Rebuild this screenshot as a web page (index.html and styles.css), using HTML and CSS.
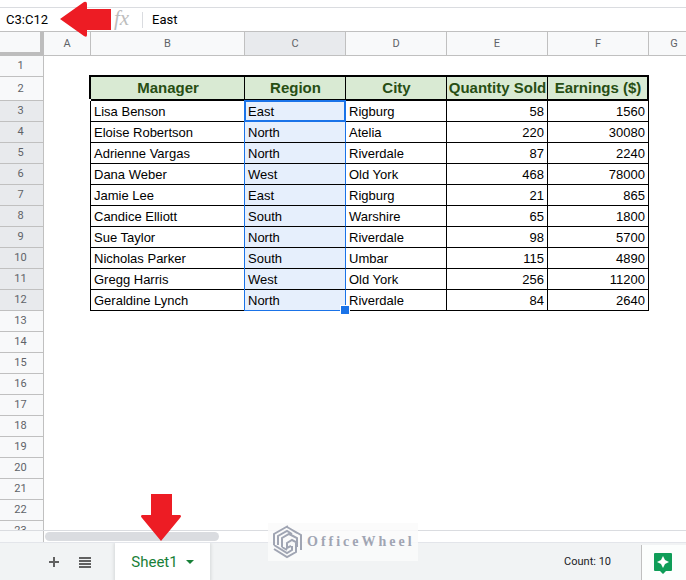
FILE: index.html
```html
<!DOCTYPE html>
<html lang="en">
<head>
    <meta charset="UTF-8">
    <title>Sheet1</title>
    <link rel="stylesheet" href="styles.css">
</head>
<body>
    <div class="formula-bar">
        <input class="name-box" type="text" value="C3:C12" aria-label="Name box">
        <label class="fx" for="formula">fx</label>
        <input class="formula" id="formula" type="text" value="East">
        <svg class="arrow arrow-left" width="52" height="36" viewBox="0 0 52 36">
            <path d="M0 18 24 1q3-1 3 2v5h24v21H27v5q0 3-3 1z"/>
        </svg>
    </div>

    <div class="grid">
        <table class="sheet">
            <colgroup>
                <col class="w-num"><col class="w-a"><col class="w-b"><col class="w-std"><col class="w-std"><col class="w-std"><col class="w-std"><col class="w-g"><col>
            </colgroup>
            <thead>
                <tr>
                    <td class="corner"></td>
                    <th>A</th><th>B</th><th class="on">C</th><th>D</th><th>E</th><th>F</th><th>G</th><th></th>
                </tr>
            </thead>
            <tbody>
                <tr><th>1</th></tr>
                <tr class="fields"><th>2</th><td class="edge"></td><td>Manager</td><td>Region</td><td>City</td><td>Quantity Sold</td><td>Earnings ($)</td></tr>
                <tr class="row"><th>3</th><td></td><td>Lisa Benson</td><td class="active">East</td><td>Rigburg</td><td>58</td><td>1560</td></tr>
                <tr class="row"><th>4</th><td></td><td>Eloise Robertson</td><td>North</td><td>Atelia</td><td>220</td><td>30080</td></tr>
                <tr class="row"><th>5</th><td></td><td>Adrienne Vargas</td><td>North</td><td>Riverdale</td><td>87</td><td>2240</td></tr>
                <tr class="row"><th>6</th><td></td><td>Dana Weber</td><td>West</td><td>Old York</td><td>468</td><td>78000</td></tr>
                <tr class="row"><th>7</th><td></td><td>Jamie Lee</td><td>East</td><td>Rigburg</td><td>21</td><td>865</td></tr>
                <tr class="row"><th>8</th><td></td><td>Candice Elliott</td><td>South</td><td>Warshire</td><td>65</td><td>1800</td></tr>
                <tr class="row"><th>9</th><td></td><td>Sue Taylor</td><td>North</td><td>Riverdale</td><td>98</td><td>5700</td></tr>
                <tr class="row"><th>10</th><td></td><td>Nicholas Parker</td><td>South</td><td>Umbar</td><td>115</td><td>4890</td></tr>
                <tr class="row"><th>11</th><td></td><td>Gregg Harris</td><td>West</td><td>Old York</td><td>256</td><td>11200</td></tr>
                <tr class="row"><th>12</th><td></td><td>Geraldine Lynch</td><td class="last">North</td><td>Riverdale</td><td>84</td><td>2640</td></tr>
                <tr><th>13</th></tr>
                <tr><th>14</th></tr>
                <tr><th>15</th></tr>
                <tr><th>16</th></tr>
                <tr><th>17</th></tr>
                <tr><th>18</th></tr>
                <tr><th>19</th></tr>
                <tr><th>20</th></tr>
                <tr><th>21</th></tr>
                <tr><th>22</th></tr>
                <tr><th>23</th></tr>
            </tbody>
        </table>
    </div>

    <div class="scroll"><div class="track"><div class="thumb"></div></div></div>

    <div class="footer">
        <button class="icon-btn" aria-label="Add sheet">
            <svg width="12" height="12" viewBox="0 0 12 12"><path d="M5 1h2v4h4v2H7v4H5V7H1V5h4z"/></svg>
        </button>
        <button class="icon-btn" aria-label="All sheets">
            <svg width="12" height="12" viewBox="0 0 12 12"><path d="M0 1h12v2H0zM0 4h12v2H0zM0 7h12v2H0zM0 10h12v2H0z"/></svg>
        </button>
        <button class="tab">Sheet1
            <svg width="8" height="4" viewBox="0 0 8 4"><path d="M0 0h8L4 4z"/></svg>
        </button>
        <div class="count">Count: 10</div>
        <button class="explore" aria-label="Explore">
            <svg width="18" height="21" viewBox="0 0 18 21">
                <path fill="#0f9d58" d="M1 0h16q1 0 1 1v16q0 1-1 1h-5l-3 3-3-3H1q-1 0-1-1V1q0-1 1-1z"/>
                <path fill="#fff" d="M9 3l2 4 4 2-4 2-2 4-2-4-4-2 4-2z"/>
            </svg>
        </button>
        <svg class="arrow arrow-down" width="40" height="48" viewBox="0 0 40 48">
            <path d="M10 0h21v21h8q2 1 0 3L20 47 1 24q-2-2 0-3h9z"/>
        </svg>
        <div class="watermark">
            <svg width="30" height="34" viewBox="0 0 30 34">
                <path d="M1 20V9L15 1M5 20V11l9-5 5 3M9 22v-9l7-4 4 2M14 2l14 8v15M19 5l5 3M24 22v-9l-4-2M1 24l13 8 9-5V17l-4-2-5 3v5l4-2M1 20l13 8 5-3v-4M9 22l5 3"/>
            </svg>
            <span>OfficeWheel</span>
        </div>
    </div>
</body>
</html>
```

FILE: styles.css
```css
* {
    box-sizing: border-box;
}
body {
    margin: 0;
    padding-top: 7px;
    height: 100vh;
    display: flex;
    flex-direction: column;
    overflow: hidden;
    font-family: Roboto, sans-serif;
    background: #fff;
}
button {
    border: 0;
    padding: 0;
    background: none;
    font-family: inherit;
    cursor: pointer;
}
input {
    border: 0;
    padding: 0;
    outline: 0;
    background: none;
    font: 13px/22px Roboto, sans-serif;
    color: #000;
}

/* formula bar */
.formula-bar {
    position: relative;
    display: flex;
    align-items: center;
    height: 25px;
    border-top: 1px solid #dadce0;
    border-bottom: 1px solid #c0c0c0;
}
.name-box {
    width: 100px;
    height: 23px;
    padding-left: 6px;
}
.fx {
    width: 43px;
    height: 16px;
    padding-left: 14px;
    border-right: 1px solid #dadce0;
    font: italic 21px/12px "Liberation Serif", serif;
    color: #bdbdbd;
}
.formula {
    flex: 1;
    height: 23px;
    padding-left: 9px;
}
.arrow {
    position: absolute;
    fill: #ed1c24;
}
.arrow-left {
    left: 60px;
    top: -7px;
}
.arrow-down {
    left: 141px;
    top: -49px;
}

/* grid */
.grid {
    flex: 1;
    min-height: 0;
    overflow: hidden;
}
.sheet {
    width: 100%;
    table-layout: fixed;
    border-collapse: separate;
    border-spacing: 0;
    font-size: 11px;
}
.w-num { width: 44px; }
.w-a { width: 47px; }
.w-b { width: 154px; }
.w-std { width: 101px; }
.w-g { width: 51px; }
.sheet th,
.sheet td {
    padding: 0;
    height: 21px;
    line-height: 16px;
    white-space: nowrap;
}
.sheet th {
    background: #f8f9fa;
    border-right: 1px solid #c0c0c0;
    border-bottom: 1px solid #c0c0c0;
    color: #5f6368;
    font-weight: normal;
    text-align: center;
}
.sheet tbody th {
    padding-right: 2px;
}
.sheet thead th {
    height: 24px;
}
.sheet .corner {
    background: #f8f9fa;
    border-right: 4px solid #bdbdbd;
    border-bottom: 4px solid #bdbdbd;
}
.sheet .on,
.sheet .row th {
    background: #e8eaed;
}
.fields td {
    background: #d9ead3;
    border-right: 1px solid #000;
    border-bottom: 2px solid #000;
    box-shadow: 0 -2px #000;
    color: #274e13;
    font: bold 15px/16px "Liberation Sans", Arial, sans-serif;
    text-align: center;
}
.sheet .fields th,
.sheet .fields td {
    height: 24px;
}
.sheet .fields td {
    padding-left: 1px;
}
.fields td:nth-child(3) {
    box-shadow: -2px -2px #000, 0 -2px #000;
}
.fields td:last-child {
    border-right-width: 2px;
}
.sheet .edge {
    background: none;
    border: 0;
    box-shadow: none;
}
.row td {
    border-right: 1px solid #000;
    border-bottom: 1px solid #000;
    color: #000;
    font: 13px/16px "Liberation Sans", Arial, sans-serif;
}
.sheet .row td {
    padding: 2px 3px 0;
}
.sheet .row td:nth-child(2) {
    border-bottom: 0;
}
.row td:nth-child(n+6) {
    text-align: right;
}

/* selection */
.row td:nth-child(4) {
    position: relative;
    background: #e6effc;
    border-right-color: #1a73e8;
    box-shadow: -1px 0 #1a73e8;
}
.row .active::after {
    content: "";
    position: absolute;
    inset: -1px;
    border: 2px solid #1a73e8;
}
.sheet .last {
    border-bottom-color: #1a73e8;
}
.last::after {
    content: "";
    position: absolute;
    z-index: 1;
    right: -5px;
    bottom: -5px;
    width: 8px;
    height: 8px;
    border: 1px solid #fff;
    background: #1a73e8;
}

/* scrollbar */
.scroll {
    height: 12px;
    padding-left: 43px;
    border-top: 1px solid #dadce0;
    background: #f8f9fa;
}
.track {
    height: 11px;
    padding: 1px;
    border-left: 1px solid #c0c0c0;
    background: #fff;
}
.thumb {
    width: 174px;
    height: 9px;
    border-radius: 5px;
    background: #dadce0;
}

/* bottom bar */
.footer {
    position: relative;
    display: flex;
    align-items: center;
    height: 38px;
    padding-left: 38px;
    border-top: 1px solid #e3e5ea;
    background: #f1f3f4;
}
.icon-btn {
    width: 31px;
    height: 31px;
    fill: #616161;
}
.icon-btn svg,
.explore svg {
    display: block;
    margin: 0 auto;
}
.tab {
    display: flex;
    align-items: center;
    justify-content: center;
    gap: 8px;
    width: 95px;
    height: 37px;
    margin-left: 15px;
    background: #fff;
    box-shadow: 0 1px 3px 1px rgba(60, 64, 67, .15);
    clip-path: inset(0 -4px);
    color: #188038;
    fill: #188038;
    font-size: 15px;
    font-weight: 400;
}
.count {
    margin-left: auto;
    padding-right: 30px;
    font-size: 11px;
    color: #202124;
}
.explore {
    width: 45px;
    height: 35px;
    margin-top: 2px;
    padding: 2px 2px 0 0;
    border-left: 1px solid #c0c0c0;
    background: #fcfefd;
}

/* logo stamp */
.watermark {
    position: absolute;
    left: 268px;
    top: -20px;
    display: flex;
    align-items: center;
    gap: 4px;
    width: 150px;
    height: 38px;
    padding-left: 5px;
    background: rgba(250, 250, 250, .85);
    color: #a0a5b3;
    font: bold 14px/18px "Liberation Serif", serif;
    letter-spacing: 3px;
}
.watermark svg {
    flex: none;
    fill: none;
    stroke: #a0a5b3;
    stroke-width: 2;
}
```
